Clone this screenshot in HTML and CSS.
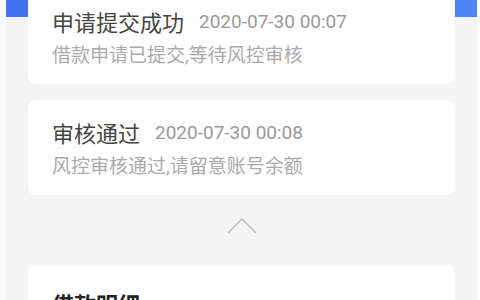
FILE: index.html
```html
<!DOCTYPE html>
<html lang="zh">
<head>
<meta charset="utf-8">
<link rel="stylesheet" href="styles.css">
</head>
<body>
<div class="page">
  <div class="header"></div>
  <div class="list">
    <div class="card">
      <div class="row"><span class="title">申请提交成功</span><span class="time">2020-07-30 00:07</span></div>
      <div class="desc">借款申请已提交,等待风控审核</div>
    </div>
    <div class="card">
      <div class="row"><span class="title">审核通过</span><span class="time">2020-07-30 00:08</span></div>
      <div class="desc">风控审核通过,请留意账号余额</div>
    </div>
    <div class="toggle">
      <svg width="30" height="16" viewBox="0 0 30 16"><polyline points="1,15 15,1 29,15" fill="none" stroke="#bdbdbd" stroke-width="1.5"/></svg>
    </div>
    <div class="card detail">
      <div class="detail-title">借款明细</div>
    </div>
  </div>
</div>
</body>
</html>
```
FILE: styles.css
```css
html, body {
  margin: 0;
  padding: 0;
  background: #fbfbfb;
  font-family: "Roboto", "Noto Sans CJK SC", sans-serif;
}
.page {
  margin: 0 3px 0 6px;
  height: 300px;
  overflow: hidden;
  background: #f4f4f4;
}
.header {
  height: 17px;
  background: linear-gradient(90deg, #4272f2, #4f83f6);
}
.list {
  margin-top: -28px;
  padding: 0 22px;
  display: flex;
  flex-direction: column;
}
.card {
  background: #fff;
  border-radius: 8px;
  padding: 18px 24px 15px;
  margin-bottom: 16px;
}
.row {
  display: flex;
  align-items: center;
  gap: 15px;
  height: 28px;
}
.title {
  font-size: 22px;
  color: #444;
}
.time {
  font-size: 19px;
  color: #9a9a9a;
}
.desc {
  margin-top: 8px;
  font-size: 19px;
  line-height: 26px;
  color: #aaa;
}
.toggle {
  height: 70px;
  margin-top: -16px;
  display: flex;
  justify-content: center;
  align-items: flex-start;
}
.toggle svg {
  margin-top: 23px;
}
.detail {
  padding-top: 22px;
}
.detail-title {
  font-size: 22px;
  font-weight: bold;
  color: #222;
}
```
